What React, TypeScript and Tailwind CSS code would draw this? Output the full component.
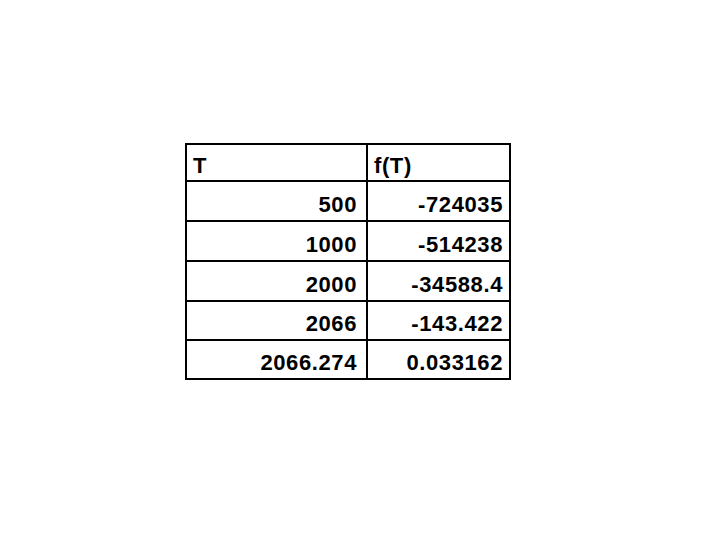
export default function App() {
  const rows = [
    ['500', '-724035'],
    ['1000', '-514238'],
    ['2000', '-34588.4'],
    ['2066', '-143.422'],
    ['2066.274', '0.033162']
  ]

  return (
    <main
      className="min-h-[540px] w-[720px] bg-white pl-[185px] pt-[143px] text-black"
      style={{ fontFamily: '"Liberation Sans", Arial, sans-serif' }}
    >
      <div className="grid w-[326px] grid-cols-[179px_141px] grid-rows-[35px_38px_38px_38px_37px_37px] gap-[2px] bg-black p-[2px] text-[22px] font-bold leading-[25px] tracking-[0.6px]">
        {/* header */}
        <div className="flex items-end bg-white pb-[2px] pl-[6px]">T</div>
        <div className="flex items-end bg-white pb-[2px] pl-[6px]">f(T)</div>

        {rows.map(([t, f]) => (
          <div key={t} className="contents">
            <div className="flex items-end justify-end bg-white pb-[3px] pr-[9px]">{t}</div>
            <div className="flex items-end justify-end bg-white pb-[3px] pr-[6px]">{f}</div>
          </div>
        ))}
      </div>
    </main>
  )
}
